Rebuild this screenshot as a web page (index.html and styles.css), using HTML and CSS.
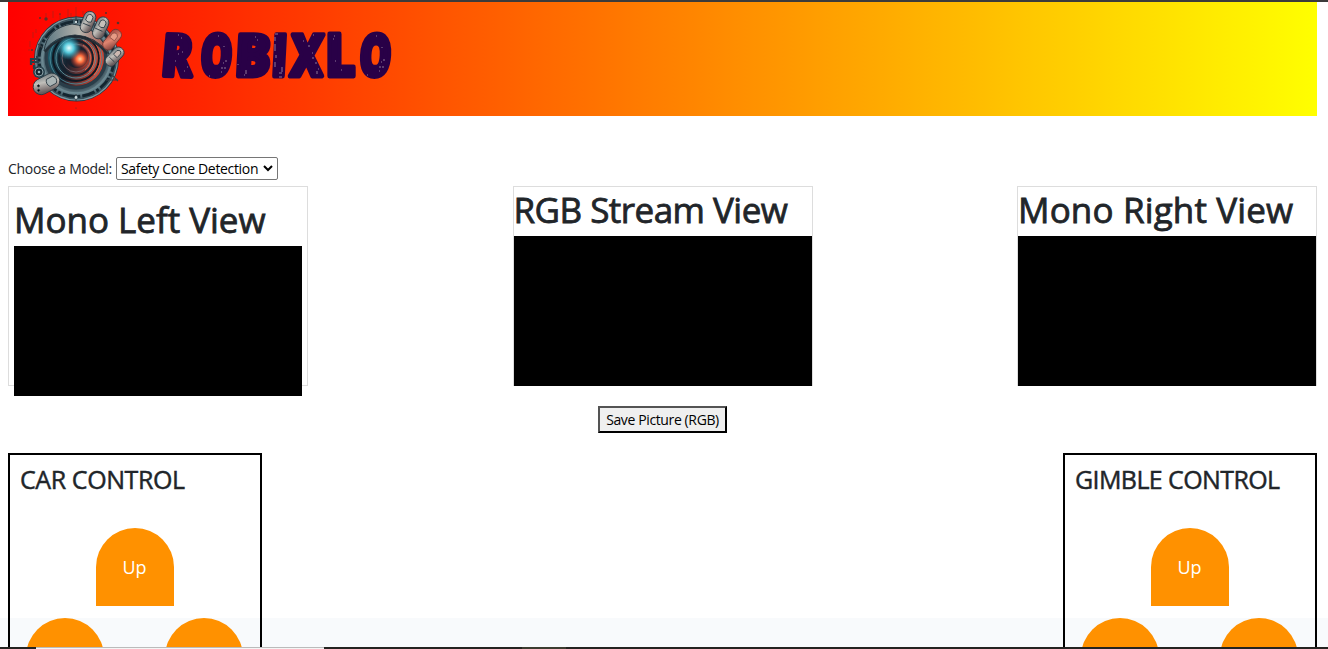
FILE: index.html
```html
<!DOCTYPE html>
<html lang="en">
<head>
<meta charset="utf-8">
<title>Robixlo</title>
<link rel="stylesheet" href="styles.css">
</head>
<body>
<div class="frame-top"></div>
<main class="page">
  <header class="banner">
    <svg class="logo" viewBox="0 0 110 112" role="img" aria-label="Robotic eye">
      <defs>
        <radialGradient id="shell"><stop offset=".6" stop-color="#182832"/><stop offset=".82" stop-color="#66818b"/><stop offset="1" stop-color="#203642"/></radialGradient>
        <linearGradient id="lens" x1="0" x2="1" y2=".25"><stop stop-color="#1c6a7c"/><stop offset=".45" stop-color="#16212e"/><stop offset="1" stop-color="#cd4431"/></linearGradient>
        <radialGradient id="blue"><stop stop-color="#eaffff"/><stop offset=".4" stop-color="#57c9db"/><stop offset="1" stop-color="#2499b4" stop-opacity="0"/></radialGradient>
        <radialGradient id="ember"><stop stop-color="#ffd7a0"/><stop offset=".35" stop-color="#ff7040"/><stop offset="1" stop-color="#ce2c20" stop-opacity="0"/></radialGradient>
        <linearGradient id="finger" x1="0" x2="1" y2=".5"><stop stop-color="#66747a"/><stop offset=".5" stop-color="#c1bfba"/><stop offset="1" stop-color="#685b5c"/></linearGradient>
        <linearGradient id="warm" x1="0" x2="1" y2="1"><stop stop-color="#963f39"/><stop offset=".5" stop-color="#e08570"/><stop offset="1" stop-color="#733735"/></linearGradient>
        <linearGradient id="lid" x1="0" x2="1"><stop stop-color="#597681"/><stop offset=".55" stop-color="#b5b3ac"/><stop offset="1" stop-color="#ad4639"/></linearGradient>
      </defs>
      <g transform="translate(-20 -2)">
        <circle cx="76.500" cy="59" r="42.500" fill="url(#shell)"/>
        <g fill="none">
          <circle cx="76.500" cy="59" r="41" stroke="#8097a0" stroke-width="1.2"/>
          <circle cx="76.500" cy="59" r="37.500" stroke="#142630" stroke-width="3" stroke-dasharray="13 2 3 2"/>
          <circle cx="76.500" cy="59" r="34" stroke="#6c8992" stroke-width="1.5"/>
        </g>
        <circle cx="76" cy="58" r="28" fill="url(#lens)"/>
        <g fill="none" stroke-width=".9">
          <circle cx="76" cy="58" r="30" stroke="#293d49" stroke-width="3"/>
          <circle cx="76" cy="58" r="26" stroke="#4c8a99"/>
          <circle cx="76" cy="58" r="23" stroke="#101822" stroke-width="2"/>
          <circle cx="76" cy="58" r="20" stroke="#60919b"/>
          <circle cx="76" cy="58" r="17" stroke="#14202c" stroke-width="2"/>
          <circle cx="76" cy="58" r="14" stroke="#76636b"/>
          <path d="M84 35a25 25 0 0 1 10 40M83 40a20 20 0 0 1 6 32M83 45a15 15 0 0 1 2 25" stroke="#dd7057"/>
        </g>
        <circle cx="77" cy="57" r="11" fill="#18202d"/>
        <circle cx="80" cy="59" r="10" fill="url(#ember)"/>
        <path d="M44 51Q47 28 72 24Q99 27 109 54Q96 36 75 35Q55 36 44 51Z" fill="url(#lid)" stroke="#293740"/>
        <path d="M45 52Q57 37 76 37Q95 38 107 54" fill="none" stroke="#222c34" stroke-width="2"/>
        <circle cx="69" cy="48" r="12" fill="url(#blue)"/>
        <g stroke="#293740" stroke-width=".8">
          <g transform="rotate(22 88 22)"><rect x="82" y="11" width="12" height="22" rx="6" fill="url(#finger)"/><path d="M85 16q3-4 6 0v5q-3 2-6 0zM84 25h8" fill="#cac8c1"/></g>
          <g transform="rotate(24 100 27)"><rect x="95" y="16" width="12" height="23" rx="6" fill="url(#finger)"/><path d="M98 21q3-4 6 0v5q-3 2-6 0zM96 30h8" fill="#c6bfb9"/></g>
          <g transform="rotate(38 112 39)"><rect x="107" y="28" width="11" height="23" rx="5" fill="url(#warm)" stroke="#713731"/><path d="M109 34q3-4 6 0v5h-6z" fill="#e69b85" stroke="#8c4e43"/></g>
          <g transform="rotate(43 115 57)"><rect x="109" y="46" width="11" height="22" rx="5" fill="url(#finger)"/><path d="M112 51q3-4 5 0v5h-5zM111 61h7" fill="#cdb9b1"/></g>
          <g transform="rotate(62 46 83)"><rect x="39" y="69" width="16" height="28" rx="8" fill="url(#finger)"/><path d="M43 74q4-4 8 0v7q-4 3-8 0z" fill="#aab5b6"/><circle cx="45" cy="91" r="1"/><circle cx="49" cy="93" r="1"/></g>
        </g>
        <circle cx="39" cy="72" r="6" fill="#29434e"/><circle cx="39" cy="72" r="4" fill="#142630" stroke="#8ba0a7"/><circle cx="39" cy="72" r="1.3" fill="#9db1b7"/>
        <path d="M31 58v7M30 59h7v-3M31 62h8M34 65v4" fill="none" stroke="#27404b" stroke-width="2.2"/>
        <path d="M111 74l7 7M106 80h12M76 94v7M76 16v8M38 44l5 4" stroke="#394248" stroke-width="1.2"/>
        <circle cx="76" cy="97.500" r="1.400" fill="#c9d7da"/><circle cx="76" cy="22" r="1.200" fill="#c9d7da"/>
        <g fill="none" stroke="#982a20" stroke-width=".6"><path d="M53 11v7M60 14v7M68 9v8M71 13v7M76 7v9M83 11v4M46 13v6M33 32v6M30 41v6M28 50h2M36 29v4"/></g>
        <g fill="#59332d"><circle cx="46" cy="19" r="1.700"/><circle cx="40" cy="18" r="1"/><circle cx="60" cy="14" r=".8"/><circle cx="106" cy="13" r="1"/><circle cx="118" cy="23" r="1.300"/><circle cx="32" cy="50" r="1"/><circle cx="76" cy="108" r=".6"/></g>
      </g>
    </svg>
    <svg class="wordmark" viewBox="160 26 234 56">
      <g class="wordmark-letters">
        <text transform="translate(161 76) rotate(2 16 -22) skewX(-3)" textLength="31" lengthAdjust="spacingAndGlyphs">R</text>
        <text transform="translate(199.500 75.500) skewX(-3)" textLength="32" lengthAdjust="spacingAndGlyphs">O</text>
        <text transform="translate(234 76) skewX(-3)" textLength="36" lengthAdjust="spacingAndGlyphs">B</text>
        <text transform="translate(270.500 75.500) skewX(-3)" textLength="16" lengthAdjust="spacingAndGlyphs">I</text>
        <text transform="translate(289.500 75.500) skewX(-3)" textLength="33" lengthAdjust="spacingAndGlyphs">X</text>
        <text transform="translate(325.500 76)" textLength="30" lengthAdjust="spacingAndGlyphs">L</text>
        <text transform="translate(358.500 75.500) skewX(-3)" textLength="32" lengthAdjust="spacingAndGlyphs">O</text>
      </g>
      <path class="wear" d="M178 35h1m2 3h1m-4 16h1m3-2h1m-8 9h1m11 6h1m-4 4h1m33-35h1m5 10v1m-1 16h1m-3 5h2m3-8v2m-1 5v2m-4 3h1m-13 4h1m36-6v4m-2 1h1m-7-11v1m17-28h1m1 3h1M275 34h3m-3 3v4m0 3v7m1 4v3m-1 4v5m7 0v5m-3 1h3m-3 4h3M303 41h1m5 4v2m4-12h1m-2 18h1m0 4v2m3 3v2m2 5h1m-2 2v3M334 36h1m-2 3h1m1 22h1m5 9h1M376 36h1m5 11v1m-1 14h1m-3 5h2m3-8v2m-1 5v2m-4 3h1m-13 4h1"/>
    </svg>
  </header>
  <div class="model-row">
    <label for="model">Choose a Model:</label>
    <div class="model-field">
      <select id="model"><option>Safety Cone Detection</option></select>
      <svg class="chevron" viewBox="0 0 10 7"><path d="M1 1l4 4 4-4"/></svg>
    </div>
  </div>
  <section class="views">
    <article class="view view-padded"><h1>Mono Left View</h1><div class="video"></div></article>
    <article class="view"><h1 class="rgb">RGB Stream View</h1><div class="video"></div></article>
    <article class="view"><h1 class="right">Mono Right View</h1><div class="video"></div></article>
  </section>
  <div class="actions"><button class="save">Save Picture (RGB)</button></div>
  <section class="controls">
    <article class="panel">
      <h2>CAR CONTROL</h2>
      <div class="pad"><button class="key up">Up</button><button class="key" aria-label="Left"></button><button class="key" aria-label="Right"></button></div>
    </article>
    <article class="panel">
      <h2 class="gimble">GIMBLE CONTROL</h2>
      <div class="pad"><button class="key up">Up</button><button class="key" aria-label="Left"></button><button class="key" aria-label="Right"></button></div>
    </article>
  </section>
</main>
<div class="frame-bottom"><div class="status"></div><div class="marker"></div></div>
</body>
</html>
```

FILE: styles.css
```css
* { box-sizing: border-box; }
body {
  margin: 0;
  height: 649px;
  overflow: hidden;
  display: flex;
  flex-direction: column;
  background: #fff;
  color: #212529;
  font-family: "Open Sans", "Noto Sans", sans-serif;
}
.frame-top { height: 2px; flex: none; background: #3b3b3b; }
.page {
  height: 645px;
  flex: none;
  overflow: hidden;
  padding: 0 11px 0 8px;
  background: linear-gradient(#fff 616px, #f8fafc 616px);
}
.banner {
  height: 114px;
  display: flex;
  padding-left: 12px;
  background: linear-gradient(to right, #f00, #ff0);
}
.logo { width: 110px; height: 112px; flex: none; }
.wordmark { width: 234px; height: 56px; margin: 24px 0 0 30px; overflow: visible; }
.wordmark-letters {
  font: 800 58px "Open Sans", sans-serif;
  fill: #290047;
  stroke: #290047;
  stroke-width: 4.8px;
  stroke-linejoin: round;
}
.wear { fill: none; stroke: #a895ad; stroke-width: .8; }
.model-row {
  height: 23px;
  margin-top: 41px;
  display: flex;
  align-items: center;
  font-size: 14px;
}
.model-row label { width: 108px; letter-spacing: -.3px; white-space: nowrap; }
.model-field { display: grid; width: 162px; height: 23px; align-items: center; }
.model-field select {
  grid-area: 1 / 1;
  width: 162px;
  height: 23px;
  padding: 0 4px;
  appearance: none;
  border: 1px solid #767676;
  border-radius: 2px;
  background: #fff;
  color: #000;
  font: 14px "Open Sans", sans-serif;
  letter-spacing: -.33px;
}
.chevron { grid-area: 1 / 1; justify-self: end; width: 10px; height: 7px; margin-right: 5px; fill: none; stroke: #000; stroke-width: 2; pointer-events: none; }
.views { display: flex; justify-content: space-between; margin-top: 6px; }
.view { width: 300px; height: 200px; border: 1px solid #ddd; }
.view-padded { padding: 10px 5px; }
h1, h2 { margin: 0; font-weight: 500; white-space: nowrap; }
h1 { height: 49px; font-size: 35px; line-height: 45px; letter-spacing: -.02px; -webkit-text-stroke: .8px #212529; }
.rgb { letter-spacing: -.53px; }
.right { letter-spacing: .15px; }
.video { height: 150px; background: #000; }
.actions { display: flex; justify-content: center; padding: 20px 0; }
.save {
  width: 129px;
  height: 27px;
  padding: 0;
  border: 2px outset #000;
  background: #efefef;
  color: #000;
  font: 14px "Open Sans", sans-serif;
  letter-spacing: -.38px;
  white-space: nowrap;
}
.controls { display: flex; justify-content: space-between; }
.panel { width: 254px; height: 370px; border: 2px solid #000; padding: 10px; }
h2 { height: 63px; font-size: 25px; line-height: 29px; letter-spacing: -.42px; -webkit-text-stroke: .45px #212529; }
.gimble { letter-spacing: -.6px; }
.pad { display: grid; grid-template-columns: 78px 78px; justify-content: space-between; row-gap: 12px; padding: 0 7px 0 6px; }
.key { width: 78px; height: 78px; padding: 0; border: 0; border-radius: 39px 39px 0 0; background: #ff9100; color: #fff; font: 18px "Open Sans", sans-serif; }
.up { grid-column: 1 / -1; justify-self: center; }
.frame-bottom { height: 2px; flex: none; display: flex; background: #242320; }
.status { width: 288px; margin-left: 36px; border-top: 1px solid #bbb; background: #f5f5f5; }
.marker { width: 44px; margin-left: 198px; background: #3c3c30; }
```
